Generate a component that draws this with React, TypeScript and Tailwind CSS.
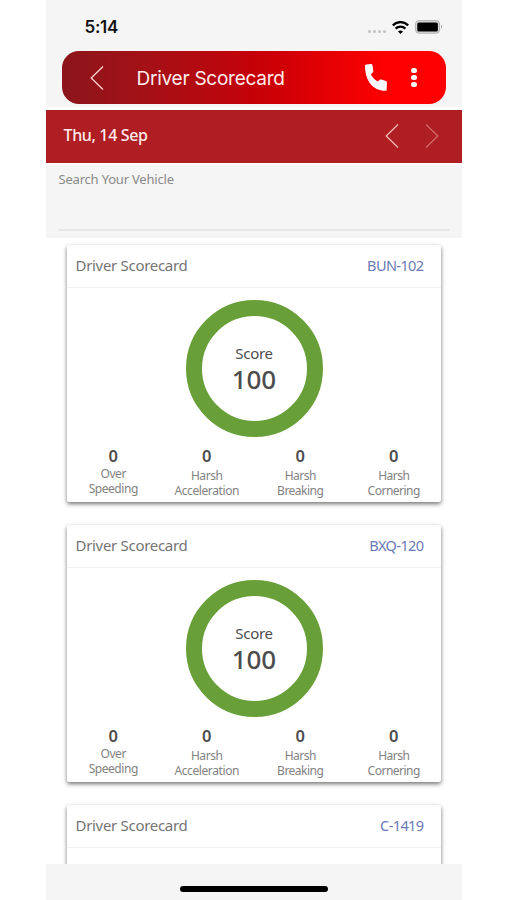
import React from "react";

const metrics = [
  { label: ["Over", "Speeding"], offset: "mt-0", tracking: "tracking-[-0.45px]" },
  { label: ["Harsh", "Acceleration"], offset: "mt-0.5", tracking: "tracking-[-0.4px]" },
  { label: ["Harsh", "Breaking"], offset: "mt-0.5", tracking: "tracking-[-0.5px]" },
  { label: ["Harsh", "Cornering"], offset: "mt-0.5", tracking: "tracking-[-0.5px]" },
];

function Chevron({ dir, className }: { dir: "left" | "right"; className: string }) {
  return (
    <svg width="14" height="26" viewBox="0 0 14 26" fill="none" className={className}>
      <path
        d={dir === "left" ? "M13 1.5 1.2 13 13 24.5" : "M1 1.5 12.8 13 1 24.5"}
        stroke="currentColor"
        strokeWidth="1.3"
      />
    </svg>
  );
}

function StatusBar() {
  return (
    <div className="flex h-[51px] items-start justify-between pl-[39px] pr-[19px] pt-[17px]">
      <span className="font-['Inter',sans-serif] text-[17px] font-semibold leading-[21px] tracking-[-0.3px] text-[#111]">
        5:14
      </span>
      <div className="flex items-center pt-[3px]">
        <div className="mr-[6px] mt-[9px] flex gap-[2px]">
          {[0, 1, 2, 3].map((i) => (
            <span key={i} className="size-[3px] rounded-full bg-[#c2c2c2]" />
          ))}
        </div>
        <svg width="17" height="13" viewBox="0 0 17 13" fill="none" className="mr-[6px]">
          <path d="M.8 4.3C5.2.1 11.8.1 16.2 4.3" stroke="#000" strokeWidth="2.4" />
          <path d="M3.6 7.6c2.7-2.6 7.1-2.6 9.8 0" stroke="#000" strokeWidth="2.3" />
          <path d="M8.5 13 6 10.4c1.4-1.3 3.6-1.3 5 0Z" fill="#000" />
        </svg>
        <svg width="28" height="14" viewBox="0 0 28 14" fill="none">
          <rect x=".6" y=".6" width="24" height="12.6" rx="3.4" fill="#d9d9d9" stroke="#b0b0b0" />
          <rect x="2.3" y="2.4" width="20.6" height="9.2" rx="1.5" fill="#000" />
          <path d="M26 4.8c1.6.6 1.6 3.4 0 4Z" fill="#aaa" />
        </svg>
      </div>
    </div>
  );
}

function ScoreCard({ id, collapsed = false }: { id: string; collapsed?: boolean }) {
  return (
    <section className="h-[257px] w-[374px] shrink-0 rounded-[2px] bg-white shadow-[0_2px_4px_rgba(0,0,0,0.55)]">
      <header className="flex h-[43px] items-center justify-between border-b border-[#f2f2f2] pb-px pl-[9px] pr-[17px] text-[15px]">
        <span className="tracking-[-0.3px] text-[#747474]">Driver Scorecard</span>
        <span className="text-[14.5px] tracking-[-0.6px] text-[#6a7ab4]">{id}</span>
      </header>
      {!collapsed && (
        <>
          <div className="flex justify-center pl-px pt-[12px]">
            <div className="flex size-[137px] flex-col items-center rounded-full border-[16px] border-[#689f38] pt-[27px]">
              <span className="text-[15px] leading-[20px] tracking-[-0.3px] text-[#4d4d4d]">Score</span>
              <span className="mt-[1px] text-[26px] font-medium leading-[30px] tracking-[-0.1px] text-[#4d4d4d]">100</span>
            </div>
          </div>
          <div className="grid grid-cols-4 pt-[9px] text-center">
            {metrics.map((m) => (
              <div key={m.label[1]}>
                <div className="text-[16.5px] font-semibold leading-[20px] text-[#4d4d4d]">0</div>
                <div className={`text-[12px] leading-[15px] text-[#828282] ${m.tracking} ${m.offset}`}>
                  {m.label[0]}
                  <br />
                  {m.label[1]}
                </div>
              </div>
            ))}
          </div>
        </>
      )}
    </section>
  );
}

export default function App() {
  return (
    <div className="flex h-[900px] w-[507px] justify-center overflow-hidden bg-white font-['Noto_Sans',sans-serif]">
      <main className="flex h-full w-[416px] flex-col bg-white">
        <div className="mb-[3px] h-[107px] shrink-0 bg-[#f5f5f5]">
          <StatusBar />
          <div className="mx-[16px] flex h-[53px] items-center rounded-[17px] bg-linear-to-r from-[#8b151b] via-[#c40006] via-50% to-[#ff0000] to-85% pl-[28px] text-white">
            <Chevron dir="left" className="text-[#ffd5d0]" />
            <h1 className="ml-[33px] mt-px flex-1 whitespace-nowrap font-['Inter',sans-serif] text-[19px] leading-none tracking-[-0.25px] text-[#ffeceb]">
              Driver Scorecard
            </h1>
            <svg width="22" height="27" viewBox="0 0 22 27" fill="#fff">
              <path d="M1.2.4 6 0c.8 0 1.3.4 1.5 1.2l.8 5.6c.1.7-.1 1.2-.6 1.7L5.9 10.6c1.5 3 3.8 5.3 6.8 7l2.1-1.8c.5-.4 1-.5 1.6-.3l4.5 1.6c.7.3 1 .8 1 1.5l-.2 6.8c0 .8-.5 1.3-1.3 1.4C8.6 27 0 17.6 0 1.8 0 .9.4.5 1.2.4Z" />
            </svg>
            <div className="ml-[24px] mr-[29px] flex flex-col gap-[1.7px]">
              <span className="h-[5px] w-[5.5px] rounded-full bg-white" />
              <span className="h-[5px] w-[5.5px] rounded-full bg-white" />
              <span className="h-[5px] w-[5.5px] rounded-full bg-white" />
            </div>
          </div>
        </div>
        <div className="flex h-[53px] shrink-0 items-center bg-[#ae1e23] pb-[2px] pl-[18px] pr-[23px]">
          <span className="mb-[2px] flex-1 text-[16px] font-medium tracking-[-0.35px] text-[#ffecea]">Thu, 14 Sep</span>
          <Chevron dir="left" className="mr-[26px] text-[#f3b9b0]" />
          <Chevron dir="right" className="text-[#cd6b69]" />
        </div>
        <div className="mt-[2px] h-[73px] shrink-0 bg-[#f5f5f5] px-[13px]">
          <div className="h-[66px] border-b-2 border-[#e6e6e6] pt-[4px] text-[13px] leading-[20px] tracking-[-0.2px] text-[#8a8a8a]">
            Search Your Vehicle
          </div>
        </div>
        <div className="flex h-[626px] shrink-0 flex-col gap-[23px] overflow-hidden pl-[21px] pt-[7px]">
          <ScoreCard id="BUN-102" />
          <ScoreCard id="BXQ-120" />
          <ScoreCard id="C-1419" collapsed />
        </div>
        <footer className="flex h-[36px] shrink-0 justify-center bg-[#f5f5f5] pt-[22px]">
          <div className="h-[6px] w-[148px] rounded-full bg-black" />
        </footer>
      </main>
    </div>
  );
}
